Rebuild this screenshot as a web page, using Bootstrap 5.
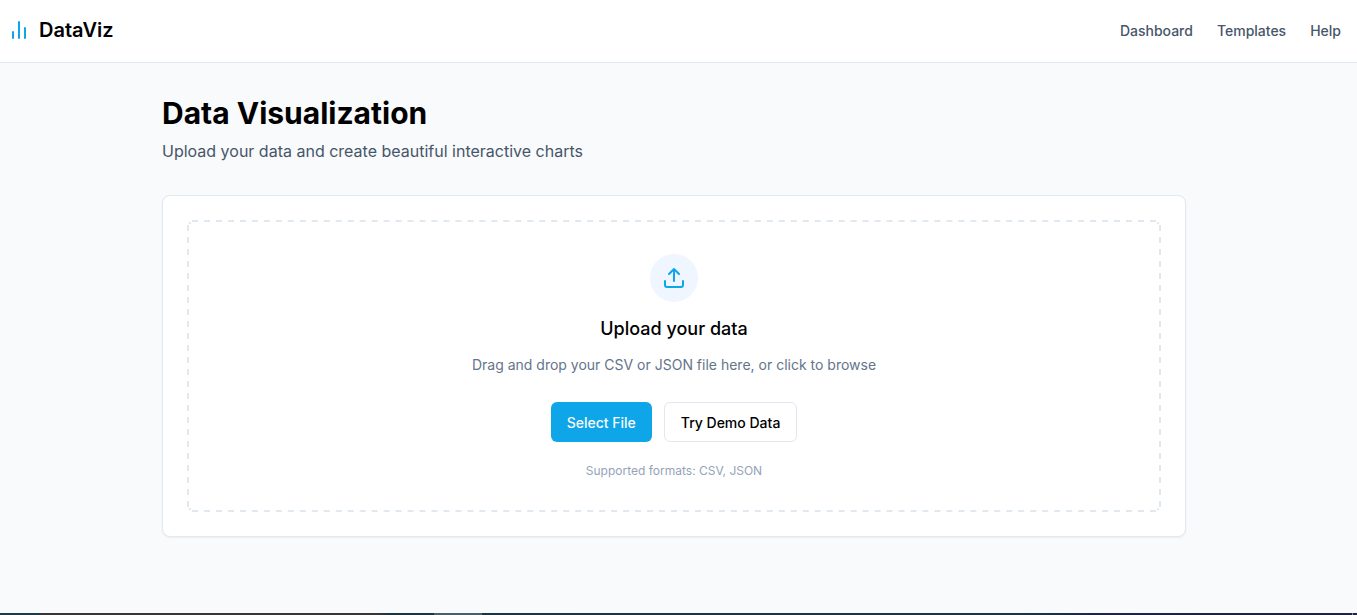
<!DOCTYPE html>
<html lang="en">
<head>
<meta charset="utf-8">
<meta name="viewport" content="width=device-width, initial-scale=1">
<title>DataViz</title>
<link href="https://cdn.jsdelivr.net/npm/bootstrap@5.3.0/dist/css/bootstrap.min.css" rel="stylesheet">
<style>
  body { font-family: Inter, "Liberation Sans", sans-serif; background: #f8fafc; color: #000; height: 100vh; overflow: hidden; }
  .site-header { height: 63px; background: #fff; border-bottom: 1px solid #e2e8f0; padding: 0 16px 0 7px; }
  .brand-icon { margin-top: -2px; }
  .brand-name { font-size: 20px; font-weight: 600; line-height: 28px; margin-top: -2px; color: #000; }
  .site-links { gap: 24px; }
  .site-links a { font-size: 14px; font-weight: 500; line-height: 20px; color: #475569; text-decoration: none; }
  .page-main { width: 1024px; margin-left: 162px; padding-top: 32px; }
  .page-title { font-size: 30px; font-weight: 700; line-height: 36px; margin-bottom: 8px; }
  .page-intro { font-size: 16px; line-height: 24px; color: #475569; margin-bottom: 32px; }
  .upload-card { border: 1px solid #e2e8f0; border-radius: 8px; padding: 24px; height: 342px; box-shadow: 0 1px 2px rgba(0,0,0,.05); }
  .drop-zone { padding: 34px 34px 33px; }
  .drop-outline { stroke: #e2e8f0; stroke-width: 2; fill: none; }
  .upload-icon { width: 48px; height: 48px; background: #eff6ff; color: #0ea5e9; }
  .upload-title { font-size: 18px; font-weight: 500; line-height: 28px; margin: 13px 0 12px; }
  .upload-text { font-size: 14px; line-height: 20px; color: #64748b; margin-bottom: 27px; }
  .upload-actions { gap: 12px; }
  .btn-tool { height: 40px; font-size: 14px; font-weight: 500; line-height: 20px; border-radius: 6px; padding: 10px 16px 8px; }
  .btn-select { background: #0ea5e9; color: #f8fafc; border: 0; }
  .btn-demo { background: #fff; color: #000; border: 1px solid #e2e8f0; }
  .formats { font-size: 12px; line-height: 16px; color: #94a3b8; margin: 21px 0 0; }
  .bottom-strip { height: 2px; background: linear-gradient(90deg, #1d3a45 0 40px, #383536 41px 380px, #1d3540 390px 434px, #4c5e68 434px 482px, #1b3442 482px, #1c3444 1020px, #1d2445 1110px, #1d2340 1352px, #8b8e9a 1352px 1353px, #1d2340 1353px); }
</style>
</head>
<body class="d-flex flex-column">
<header class="site-header d-flex align-items-center justify-content-between flex-shrink-0">
  <a href="#" class="d-flex align-items-center gap-2 text-decoration-none">
    <svg class="brand-icon" width="24" height="24" viewBox="0 0 24 24" fill="none" stroke="#0ea5e9" stroke-width="2" stroke-linecap="round"><path d="M6 20v-6M12 20V4M18 20V10"/></svg>
    <span class="brand-name">DataViz</span>
  </a>
  <nav class="site-links d-flex"><a href="#">Dashboard</a><a href="#">Templates</a><a href="#">Help</a></nav>
</header>
<main class="page-main flex-grow-1">
  <h1 class="page-title">Data Visualization</h1>
  <p class="page-intro">Upload your data and create beautiful interactive charts</p>
  <section class="upload-card bg-white">
    <div class="drop-zone position-relative d-flex flex-column align-items-center text-center">
      <!-- dashed outline with even 6px dashes and gaps -->
      <svg class="drop-outline position-absolute top-0 start-0 w-100 h-100 pe-none" viewBox="0 0 974 292" aria-hidden="true">
        <path stroke-dasharray="6 5.975" d="M5 1H969M5 291H969"/>
        <path stroke-dasharray="6 6" d="M1 5V287M973 5V287"/>
        <path d="M2.3 3.7L3.7 2.3M970.3 2.3L971.7 3.7M2.3 288.3L3.7 289.7M970.3 289.7L971.7 288.3"/>
      </svg>
      <div class="upload-icon rounded-circle d-flex align-items-center justify-content-center">
        <svg width="24" height="24" viewBox="0 0 24 24" fill="none" stroke="currentColor" stroke-width="2" stroke-linecap="round" stroke-linejoin="round"><path d="M21 15v4a2 2 0 0 1-2 2H5a2 2 0 0 1-2-2v-4"/><path d="M17 8l-5-5-5 5M12 3v12"/></svg>
      </div>
      <h2 class="upload-title">Upload your data</h2>
      <p class="upload-text">Drag and drop your CSV or JSON file here, or click to browse</p>
      <div class="upload-actions d-flex">
        <button type="button" class="btn btn-tool btn-select">Select File</button>
        <button type="button" class="btn btn-tool btn-demo">Try Demo Data</button>
      </div>
      <p class="formats">Supported formats: CSV, JSON</p>
    </div>
  </section>
</main>
<footer class="bottom-strip flex-shrink-0"></footer>
<script src="https://cdn.jsdelivr.net/npm/bootstrap@5.3.0/dist/js/bootstrap.bundle.min.js"></script>
</body>
</html>
